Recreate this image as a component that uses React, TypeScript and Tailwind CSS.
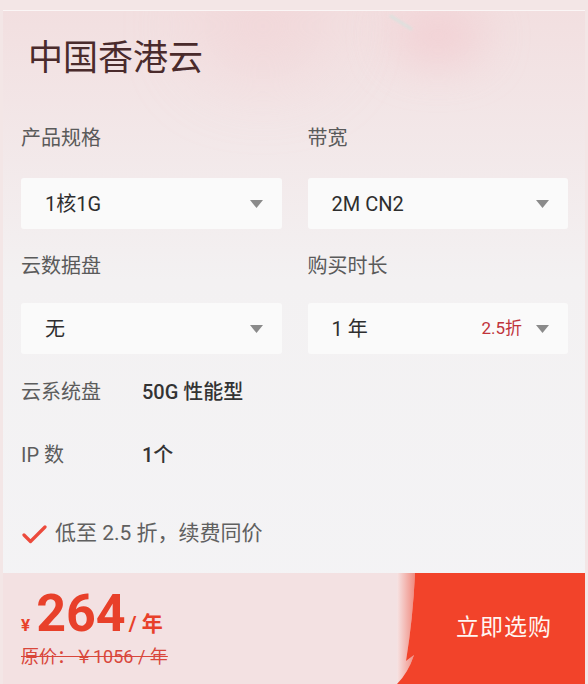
import React from "react"

const font = { fontFamily: 'Roboto, "Noto Sans CJK SC", sans-serif' }

function Caret() {
  return (
    <svg width="13" height="8" viewBox="0 0 13 8" className="shrink-0">
      <path d="M0 0 L13 0 L6.5 8 Z" fill="#8a8a8a" />
    </svg>
  )
}

function SelectBox({ value, extra }: { value: string; extra?: string }) {
  return (
    <div className="flex h-[51px] flex-1 items-center rounded-[3px] bg-[#fafafa] pl-[24px] pr-[19px]">
      <span className="flex-1 text-[20px] text-[#2e2e2e]">{value}</span>
      {extra && <span className="mr-[14px] text-[17px] text-[#c0333a]">{extra}</span>}
      <Caret />
    </div>
  )
}

function InfoRow({ label, value, className }: { label: string; value: string; className?: string }) {
  return (
    <div className={"flex h-[28px] items-center " + (className ?? "")}>
      <span className="w-[121px] text-[20px] text-[#5c5c5c]">{label}</span>
      <span className="text-[20px] font-medium text-[#333]">{value}</span>
    </div>
  )
}

function BuyButton() {
  return (
    <div className="relative flex h-full w-[188px] shrink-0 items-center justify-center">
      <svg className="absolute inset-0" width="188" height="111" viewBox="0 0 188 111">
        <defs>
          <linearGradient id="fold" x1="0" y1="0" x2="1" y2="0">
            <stop offset="0" stopColor="#f6e3e3" />
            <stop offset="1" stopColor="#f08a7e" />
          </linearGradient>
        </defs>
        <path d="M2 0 L18 0 Q16 45 9 88 L17 82 Q11 100 0 111 L0 0 Z" fill="url(#fold)" />
        <path d="M18 0 L188 0 L188 111 L0 111 Q11 100 17 82 L9 88 Q16 45 18 0 Z" fill="#f2432a" />
      </svg>
      <span className="relative ml-[26px] text-[23px] tracking-[1px] text-[#fff6f2]">立即选购</span>
    </div>
  )
}

export default function App() {
  return (
    <div className="h-[684px] w-[588px] overflow-hidden bg-[#f3e6e6] pt-[10px]" style={font}>
      <div className="relative mx-[3px] flex h-[674px] flex-col overflow-hidden border-t border-[#fbf6f6] bg-gradient-to-b from-[#f2dfe0] via-[#f3f1f2] via-40% to-[#f4f4f6]">
        {/* decorative blobs */}
        <div className="absolute left-[200px] top-[-30px] h-[90px] w-[120px] rounded-full bg-[#f0c9cd] opacity-50 blur-2xl" />
        <div className="absolute left-[390px] top-[0px] h-[50px] w-[90px] rounded-full bg-[#f2c2c8] opacity-60 blur-xl" />
        <div className="absolute left-[385px] top-[10px] h-[3px] w-[26px] rotate-[32deg] bg-[#cde6df] opacity-60 blur-[1px]" />

        <div className="relative flex flex-1 flex-col pl-[18px] pr-[17px]">
          <div className="mt-[28px] ml-[7px] h-[40px] text-[35px] leading-[40px] text-[#4a2b2c]">中国香港云</div>

          <div className="mt-[45px] flex gap-[26px]">
            <div className="flex flex-1 flex-col">
              <div className="h-[28px] text-[20px] leading-[28px] text-[#5a5a5a]">产品规格</div>
              <div className="mt-[26px] flex">
                <SelectBox value="1核1G" />
              </div>
            </div>
            <div className="flex flex-1 flex-col">
              <div className="h-[28px] text-[20px] leading-[28px] text-[#5a5a5a]">带宽</div>
              <div className="mt-[26px] flex">
                <SelectBox value="2M CN2" />
              </div>
            </div>
          </div>

          <div className="mt-[23px] flex gap-[26px]">
            <div className="flex flex-1 flex-col">
              <div className="h-[28px] text-[20px] leading-[28px] text-[#5a5a5a]">云数据盘</div>
              <div className="mt-[23px] flex">
                <SelectBox value="无" />
              </div>
            </div>
            <div className="flex flex-1 flex-col">
              <div className="h-[28px] text-[20px] leading-[28px] text-[#5a5a5a]">购买时长</div>
              <div className="mt-[23px] flex">
                <SelectBox value="1 年" extra="2.5折" />
              </div>
            </div>
          </div>

          <InfoRow className="mt-[24px]" label="云系统盘" value="50G 性能型" />
          <InfoRow className="mt-[35px]" label="IP 数" value="1个" />

          <div className="mt-[51px] flex h-[28px] items-center">
            <svg width="26" height="22" viewBox="0 0 26 22" className="mr-[8px]">
              <path d="M3 12 L9.5 18.5 L24 4" fill="none" stroke="#ec4a3c" strokeWidth="3.2" strokeLinecap="round" strokeLinejoin="round" />
            </svg>
            <span className="text-[21px] text-[#606060]">低至 2.5 折，续费同价</span>
          </div>
        </div>

        <div className="relative flex h-[111px] bg-[#f3e1e2]">
          <div className="flex flex-1 flex-col pl-[18px] pt-[14px]">
            <div className="flex items-baseline text-[#e8402a]">
              <span className="text-[17px] font-bold">¥</span>
              <span className="ml-[6px] text-[52px] font-bold leading-[54px]">264</span>
              <span className="ml-[3px] text-[21px] font-bold">/ 年</span>
            </div>
            <div className="mt-[2px] text-[18px] text-[#d9473b] line-through">原价：￥1056 / 年</div>
          </div>
          <BuyButton />
        </div>
      </div>
    </div>
  )
}
